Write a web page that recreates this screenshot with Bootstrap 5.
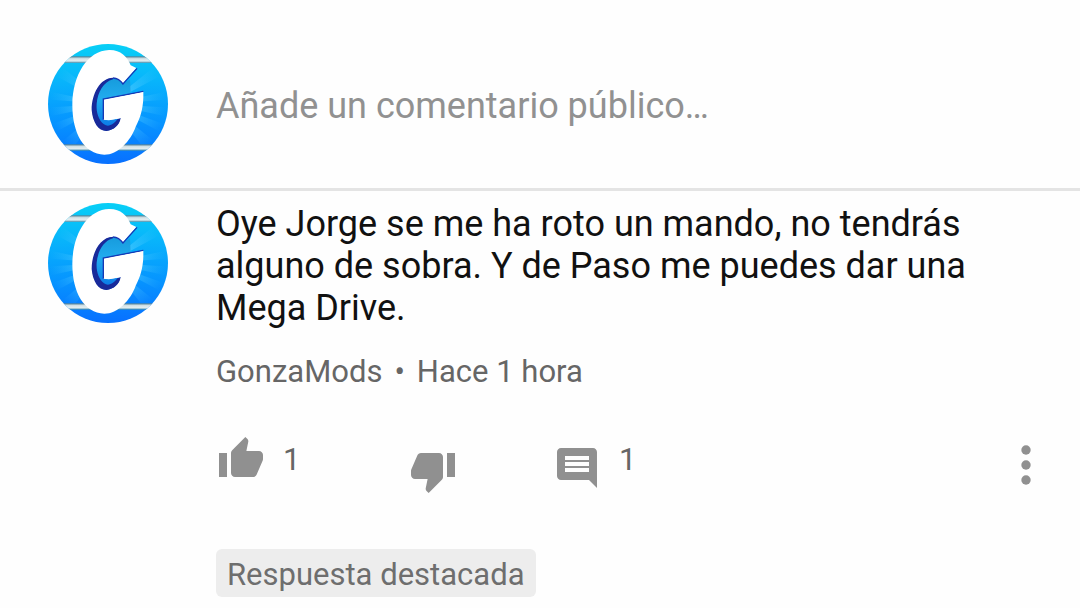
<!DOCTYPE html>
<html lang="es">
<head>
<meta charset="utf-8">
<meta name="viewport" content="width=device-width, initial-scale=1">
<title>Comentarios</title>
<link href="https://cdn.jsdelivr.net/npm/bootstrap@5.3.0/dist/css/bootstrap.min.css" rel="stylesheet">
<style>
  body { font-family: Roboto, "Noto Sans", sans-serif; background: #fefefe; color: #111; overflow-x: hidden; }
  .thread-row { column-gap: 48px; padding: 0 48px; }
  .composer { padding-top: 44px; padding-bottom: 24px; border-bottom: 3px solid #e4e4e4; }
  .thread { padding-top: 12px; }
  .avatar { width: 120px; height: 120px; }
  .composer-input, .composer-input:focus { font-size: 36px; line-height: 42px; color: #111; background: transparent; box-shadow: none; padding: 4px 0 0; }
  .composer-input::placeholder { color: #919191; opacity: 1; }
  .comment-text { font-size: 36px; line-height: 42px; margin-bottom: 24px; }
  .meta { font-size: 31px; line-height: 38px; color: #666; }
  .meta a { color: inherit; }
  .actions { margin-top: 44px; height: 60px; padding-left: 1px; }
  .action { color: #909090; line-height: 38px; font-size: 31px; column-gap: 18px; }
  .action svg { width: 48px; height: 48px; fill: currentColor; display: block; }
  .action-label { color: #666; }
  .like { width: 192px; }
  .like .action-label { padding-top: 2px; }
  .dislike { width: 144px; padding-top: 12px; }
  .reply svg { margin-top: 9px; }
  .reply .action-label { padding-top: 6px; }
  .more { padding-top: 6px; margin-right: -18px; }
  .chip { font-size: 31px; line-height: 38px; color: #6e6e6e; background: #ededed; border-radius: 6px; padding: 7px 11px 3px; margin-top: 54px; }
</style>
</head>
<body>
<svg class="position-absolute" width="0" height="0" aria-hidden="true">
  <defs>
    <linearGradient id="sky" x1="0" y1="0" x2="0" y2="1">
      <stop offset="0" stop-color="#08cff6"/><stop offset=".3" stop-color="#08b5fb"/>
      <stop offset=".65" stop-color="#0694ff"/><stop offset="1" stop-color="#0870ff"/>
    </linearGradient>
    <radialGradient id="glow" gradientUnits="userSpaceOnUse" cx="204" cy="204" r="175"><stop offset="0" stop-color="#8de6ff" stop-opacity=".75"/><stop offset="1" stop-color="#49c8ff" stop-opacity="0"/></radialGradient>
    <linearGradient id="bar" x1="0" y1="0" x2="0" y2="1"><stop offset="0" stop-color="#527e91"/><stop offset=".35" stop-color="#d4e3e8"/><stop offset=".7" stop-color="#e3edf0"/><stop offset="1" stop-color="#3d8baa"/></linearGradient>
    <linearGradient id="counter" x1="0" y1="0" x2="0" y2="1"><stop offset="0" stop-color="#169bdc"/><stop offset=".4" stop-color="#22acef"/><stop offset="1" stop-color="#0874e6"/></linearGradient>
    <clipPath id="disc"><circle cx="204" cy="204" r="180"/></clipPath>
    <symbol id="avatar" viewBox="24 24 360 360">
      <g clip-path="url(#disc)">
        <rect x="24" y="24" width="360" height="360" fill="url(#sky)"/>
        <path fill="url(#glow)" d="M204 204 20 165V190ZM204 204 20 215V243ZM204 204 20 270V302ZM204 204 50 330 85 352ZM204 204 30 110 50 80ZM204 204 388 165V190ZM204 204 388 215V243ZM204 204 388 270V302ZM204 204 360 330 325 352ZM204 204 378 110 358 80Z"/>
        <rect x="24" y="61" width="360" height="20" fill="url(#bar)"/>
        <rect x="24" y="325" width="360" height="19" fill="url(#bar)"/>
        <path fill="#fff" d="M207 42C241 41 262 61 272 88L289 96 248 143 246 180 310 167V184C309 221 300 247 287 272C272 315 233 356 193 356C132 353 97 292 97 206C98 116 143 44 207 42Z"/>
        <path fill="url(#counter)" d="M216 126C180 131 158 176 158 220C160 260 177 284 199 284C220 282 237 270 241 247L207 253 189 251V190L272 174 270 130 249 144Q236 127 216 126Z"/>
        <path fill="#182a9a" d="M219 125C180 126 155 173 155 222C158 260 176 286 200 285C221 282 239 268 242 246L232 250C222 265 205 275 192 265C176 252 168 230 170 203C173 169 191 137 219 130Z"/>
        <path fill="none" stroke="#1638b5" stroke-width="4" d="M190 251V189L310 166M219 126Q237 127 249 144L291 97"/>
        <path fill="#fff" d="M192 192 309 169V200L240 247 207 252 192 250Z"/>
      </g>
    </symbol>
  </defs>
</svg>

<main>
  <form class="thread-row composer d-flex align-items-center">
    <svg class="avatar flex-shrink-0" role="img" aria-label="GonzaMods"><use href="#avatar"/></svg>
    <input class="composer-input form-control border-0 rounded-0" type="text" placeholder="Añade un comentario público…" aria-label="Añade un comentario público">
  </form>

  <article class="thread-row thread d-flex align-items-start">
    <svg class="avatar flex-shrink-0" role="img" aria-label="GonzaMods"><use href="#avatar"/></svg>
    <div class="flex-grow-1">
      <p class="comment-text">Oye Jorge se me ha roto un mando, no tendrás alguno de sobra. Y de Paso me puedes dar una Mega Drive.</p>
      <div class="meta d-flex"><a class="text-decoration-none" href="#">GonzaMods</a><span class="px-2 mx-1">•</span><span>Hace 1 hora</span></div>
      <div class="actions d-flex align-items-start">
        <button type="button" class="action like btn border-0 p-0 d-flex align-items-center" aria-label="Me gusta, 1">
          <svg viewBox="0 0 24 24"><path d="M1 21h4V9H1v12zm22-11c0-1.100-.9-2-2-2h-6.310l.95-4.570.03-.32c0-.41-.17-.79-.44-1.060L14.170 1 7.590 7.590C7.220 7.950 7 8.450 7 9v10c0 1.100.9 2 2 2h9c.83 0 1.540-.5 1.840-1.220l3.020-7.050c.09-.23.14-.47.14-.73v-2z"/></svg>
          <span class="action-label">1</span>
        </button>
        <button type="button" class="action dislike btn border-0 px-0 pb-0" aria-label="No me gusta">
          <svg viewBox="0 0 24 24"><path d="M15 3H6c-.83 0-1.540.5-1.840 1.220l-3.020 7.050c-.09.23-.14.47-.14.73v2c0 1.100.9 2 2 2h6.310l-.95 4.570-.03.32c0 .41.17.79.44 1.060L9.830 23l6.590-6.590c.36-.36.58-.86.58-1.410V5c0-1.100-.9-2-2-2zm4 0v12h4V3h-4z"/></svg>
        </button>
        <button type="button" class="action reply btn border-0 p-0 d-flex align-items-start" aria-label="Respuestas, 1">
          <svg viewBox="0 0 24 24"><path d="M21.990 4c0-1.100-.89-2-1.990-2H4c-1.100 0-2 .9-2 2v12c0 1.100.9 2 2 2h14l4 4-.01-18zM18 14H6v-2h12v2zm0-3H6V9h12v2zm0-3H6V6h12v2z"/></svg>
          <span class="action-label">1</span>
        </button>
        <button type="button" class="action more btn border-0 px-0 pb-0 ms-auto" aria-label="Más opciones">
          <svg viewBox="0 0 48 48"><circle cx="24" cy="9" r="4.700"/><circle cx="24" cy="24" r="4.700"/><circle cx="24" cy="39" r="4.700"/></svg>
        </button>
      </div>
      <span class="chip d-inline-block">Respuesta destacada</span>
    </div>
  </article>
</main>
<script src="https://cdn.jsdelivr.net/npm/bootstrap@5.3.0/dist/js/bootstrap.bundle.min.js"></script>
</body>
</html>
